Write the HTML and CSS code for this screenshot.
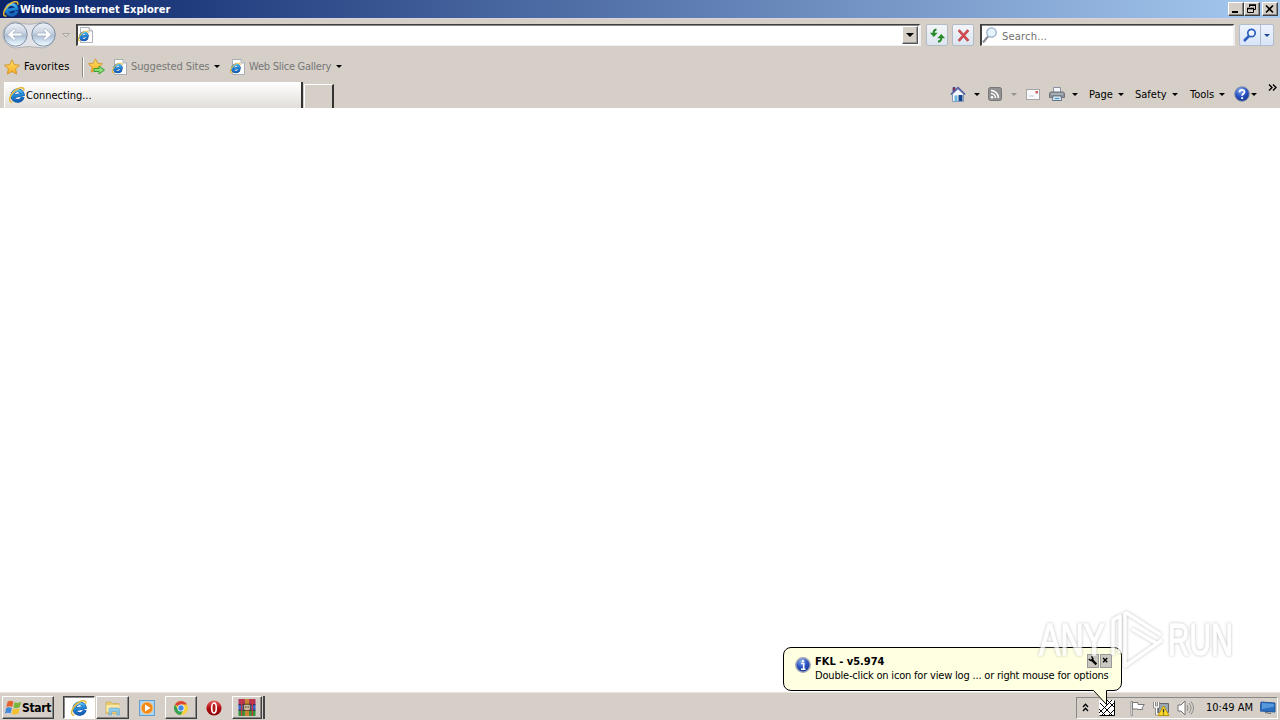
FILE: index.html
```
<!DOCTYPE html>
<html lang="en">
<head>
  <meta charset="UTF-8" />
  <title>Windows Internet Explorer</title>
  <meta name="viewport" content="width=device-width, initial-scale=1" />
  <link rel="stylesheet" href="styles.css">
</head>
<body>
<svg class="defs" width="0" height="0">
  <defs>
    <linearGradient id="blueE" x2="0" y2="1"><stop offset="0" stop-color="#5cc4f5"/><stop offset=".5" stop-color="#1f86d6"/><stop offset="1" stop-color="#1560b8"/></linearGradient>
    <radialGradient id="ball" cx=".4" cy=".25" r=".8"><stop offset="0" stop-color="#91b2f0"/><stop offset=".5" stop-color="#2b55c4"/><stop offset="1" stop-color="#14318c"/></radialGradient>
    <linearGradient id="nav" x2="0" y2="1"><stop offset="0" stop-color="#eef2f8"/><stop offset=".4" stop-color="#ccd6e4"/><stop offset=".55" stop-color="#aebfd4"/><stop offset=".8" stop-color="#d3e4f2"/><stop offset="1" stop-color="#f4fcff"/></linearGradient>
    <linearGradient id="gold" x2="0" y2="1"><stop offset="0" stop-color="#ffe66e"/><stop offset="1" stop-color="#f7a81c"/></linearGradient>
    <linearGradient id="red" x2="0" y2="1"><stop offset="0" stop-color="#e66"/><stop offset=".5" stop-color="#b30d12"/><stop offset="1" stop-color="#8c0006"/></linearGradient>
  </defs>
  <symbol id="ie" viewBox="0 0 16 16">
    <g transform="rotate(-12 8 8)">
      <path d="M13.300 11A5.300 5.300 0 1 1 13.800 8.700H5" fill="none" stroke="#134f9c" stroke-width="3.600"/>
      <path d="M13.300 11A5.300 5.300 0 1 1 13.800 8.700H5" fill="none" stroke="url(#blueE)" stroke-width="2.700"/>
    </g>
    <path d="M3.400 14.900C-.4 15.800.2 11.500 2.400 7.600 5.500 2.700 11.300-.3 14 1c1 .6.900 1.700.6 2.700" fill="none" stroke="#e6b93a" stroke-width="1.500"/>
  </symbol>
  <symbol id="iepage" viewBox="0 0 16 16">
    <path d="M2.500.500H11L14.500 4V15.500H2.500z" fill="#fdfdfd" stroke="#98a0a8" stroke-width=".8"/>
    <path d="M11 .5V4h3.500" fill="#ddd" stroke="#98a0a8" stroke-width=".7"/>
    <svg x="0" y="3.500" width="11" height="11" viewBox="0 0 16 16"><use href="#ie"/></svg>
  </symbol>
  <symbol id="star" viewBox="0 0 16 16">
    <path d="M8 .8l2.200 4.800 5.300.600-3.900 3.600 1.100 5.300L8 12.500l-4.700 2.600 1.100-5.300L.5 6.200l5.300-.600z" fill="url(#gold)" stroke="#d3922a" stroke-width=".9"/>
  </symbol>
</svg>

<header class="titlebar">
  <svg class="i16"><use href="#ie"/></svg>
  <span class="title">Windows Internet Explorer</span>
  <div class="winbtns">
    <button class="wb"><svg viewBox="0 0 13 10"><path d="M3 8h6" stroke="#000" stroke-width="2"/></svg></button>
    <button class="wb"><svg viewBox="0 0 13 10"><path d="M4.500 3V1.500h6v4H9M4 1.500h7M2.500 4.500h6v4h-6zM2 4.500h7" fill="none" stroke="#000"/><path d="M4 1h7M2 4.500h7" stroke="#000" stroke-width="1.600"/></svg></button>
    <button class="wb close"><svg viewBox="0 0 13 10"><path d="M3 1.500l7 7M10 1.500l-7 7" stroke="#000" stroke-width="1.600"/></svg></button>
  </div>
</header>

<div class="navbar">
  <svg class="backfwd" viewBox="0 0 58 30">
    <path d="M15 1.500Q29 7 43 1.500A13.300 13.300 0 0 1 43 28Q29 25 15 28A13.300 13.300 0 0 1 15 1.500z" fill="#e2e4e9" stroke="#b4b3b6"/>
    <g fill="url(#nav)" stroke="#8090a4"><circle cx="15.500" cy="14.500" r="11.700"/><circle cx="43.500" cy="14.500" r="11.700"/></g>
    <path d="M7.500 14.500l6.500-6 1.800 1.800L13 13.100h9v2.800h-9l2.800 2.800L14 20.500zM51.500 14.500L45 8.500l-1.800 1.800 2.800 2.800h-9v2.800h9l-2.800 2.800 1.800 1.800z" fill="#fff" stroke="#a3b2c5" stroke-width=".8"/>
  </svg>
  <svg class="histarrow" viewBox="0 0 8 5"><path d="M.5.500h7L4 4z" fill="#ddd9d4" stroke="#aaa69f"/></svg>
  <div class="address">
    <svg class="i16"><use href="#iepage"/></svg>
    <button class="drop"><i class="arr"></i></button>
  </div>
  <button class="tool refresh"><svg viewBox="0 0 16 16"><path d="M7 2.500C4 2.500 4.500 5 4.500 6" fill="none" stroke="#278b2c" stroke-width="2"/><path d="M.8 5.500h7.400L4.500 9.500zM7.800 10.500h7.400L11.500 6.500z" fill="#278b2c"/><path d="M11.500 10c0 2 0 3.500-3 3.800" fill="none" stroke="#278b2c" stroke-width="2"/></svg></button>
  <button class="tool stop"><svg viewBox="0 0 16 16"><path d="M3.500 3l9 10M12.500 3l-9 10" stroke="#b0525a" stroke-width="2.500"/><path d="M3.500 3l9 10M12.500 3l-9 10" stroke="#dc4850" stroke-width="1.500"/></svg></button>
  <div class="search">
    <svg class="i16" viewBox="0 0 16 16"><path d="M1 15.500L6 9.500" stroke="#8b8e98" stroke-width="2.200"/><circle cx="9.500" cy="5.500" r="4.700" fill="#e4f3fc" stroke="#9aafc9" stroke-width="1.300"/></svg>
    <span>Search...</span>
  </div>
  <div class="go">
    <svg viewBox="0 0 20 20"><path d="M4 16l5-5" stroke="#2b5fbd" stroke-width="2.500"/><circle cx="11.500" cy="8" r="3.700" fill="#eef5ff" stroke="#2b5fbd" stroke-width="1.700"/></svg>
    <span class="godrop"><i class="arr blue"></i></span>
  </div>
</div>

<div class="favbar">
  <svg class="i16"><use href="#star"/></svg>
  <span class="fav">Favorites</span>
  <i class="sep"></i>
  <svg class="addfav" viewBox="0 0 17 17"><use href="#star" width="15" height="15"/><path d="M6 10.500h5V8l5.500 4-5.500 4v-2.500H6z" fill="#8fdc78" stroke="#2f9a2c" stroke-width=".9"/></svg>
  <svg class="i16 p1"><use href="#iepage"/></svg>
  <span class="link sug">Suggested Sites</span><i class="arr"></i>
  <svg class="i16 p2"><use href="#iepage"/></svg>
  <span class="link web">Web Slice Gallery</span><i class="arr"></i>
</div>

<div class="tabrow">
  <div class="tab"><svg class="i16"><use href="#ie"/></svg><span class="conn">Connecting...</span></div>
  <div class="newtab"></div>
  <div class="cmdbar">
    <svg class="i16" viewBox="0 0 16 16"><path d="M3 1.500h2v4H3z" fill="#b02b38" stroke="#272b80" stroke-width=".7"/><path d="M2.500 8v7.500h11V8L8 3z" fill="#f5f8fc" stroke="#8996b4"/><path d="M.8 8.500L8 1.500l7.200 7" fill="none" stroke="#4c5ba6" stroke-width="1.400"/><path d="M4.500 9.500h3v6h-3z" fill="#6fb7dd"/><path d="M8.500 9h4v6h-4z" fill="#15428c"/></svg>
    <i class="arr a1"></i>
    <svg class="rss" viewBox="0 0 14 14"><rect x=".5" y=".5" width="13" height="13" rx="2" fill="#929292" stroke="#777"/><path d="M3 6.500a4.500 4.500 0 0 1 4.500 4.500M3 3.500a7.500 7.500 0 0 1 7.500 7.500" fill="none" stroke="#fff" stroke-width="1.500"/><circle cx="4" cy="10.200" r="1.300" fill="#fff"/></svg>
    <i class="arr gray a2"></i>
    <svg class="mail" viewBox="0 0 14 11"><rect x=".5" y=".5" width="13" height="10" fill="#f8f9fb" stroke="#a7a5a9"/><path d="M3 7h5" stroke="#c6c9d3"/><path d="M9.500 2h2.500v2.500H9.500z" fill="#cf6262"/></svg>
    <svg class="print" viewBox="0 0 16 16"><path d="M4.500 1.500h7v5h-7z" fill="#f2f5fa" stroke="#8991a0"/><path d="M1.500 6h13l1 1.500v4H.5v-4z" fill="#8a8e97" stroke="#6e737d"/><path d="M2 8h12" stroke="#c4c8ce"/><path d="M4 10h8l.5 4.500h-9z" fill="#eff7ff" stroke="#61728a"/><path d="M5.500 12.500h5" stroke="#4d99bd" stroke-width="1.500"/></svg>
    <i class="arr a3"></i>
    <span class="page">Page</span><i class="arr"></i>
    <span class="safety">Safety</span><i class="arr"></i>
    <span class="tools">Tools</span><i class="arr"></i>
    <svg class="help" viewBox="0 0 16 16"><circle cx="8" cy="8" r="7.300" fill="url(#ball)" stroke="#8790ac"/><path d="M5.600 6.200C5.600 3 10.600 3.200 10.500 6c0 1.800-2.400 1.800-2.400 3.800" fill="none" stroke="#fff" stroke-width="1.800"/><path d="M7.200 11.200h1.900V13H7.200z" fill="#fff"/></svg>
    <i class="arr"></i>
    <svg class="more" viewBox="0 0 9 7"><path d="M1 .5l3 3-3 3M5 .5l3 3-3 3" fill="none" stroke="#000" stroke-width="1.400"/></svg>
  </div>
</div>

<main class="content"></main>

<footer class="taskbar">
  <button class="task start">
    <svg viewBox="0 0 16 16"><path d="M2.500 2.500C4.500 1 6 1.500 8 2.500L6.800 7.500C5 6.500 3 6.400 1.200 7.700z" fill="#e6612d"/><path d="M9 3c2 1 4 1 6.300-.3L14 7.600c-2 1.300-4 1.300-6.100.3z" fill="#79b63e"/><path d="M1 8.700c2-1.300 3.700-1 5.500-.2L5.200 13.500C3.400 12.600 1.700 12.600 0 13.800z" fill="#3e8bdb"/><path d="M7.600 9c2 1 4 .9 6.200-.3l-1.300 5c-2.200 1.300-4.200 1.200-6.200.2z" fill="#f5c02f"/></svg>
    <span>Start</span>
  </button>
  <button class="task pressed"><svg class="i16"><use href="#ie"/></svg></button>
  <button class="task folder"><svg class="i16" viewBox="0 0 16 16"><path d="M1 2h5l1.500 1.500H14v10H1z" fill="#e9c970" stroke="#cba748" stroke-width=".6"/><path d="M1.500 5h13v7h-13z" fill="#fbe9a6"/><path d="M4 15V9.500Q4 8 5.500 8h7Q14.500 8 14.500 9.500V15h-2.500v-3.500H6.500V15z" fill="#8ecbec" stroke="#5ba3cb" stroke-width=".6"/></svg></button>
  <svg class="media" viewBox="0 0 16 16"><rect x=".5" y=".5" width="15" height="15" fill="#a8d5f5" stroke="#5f9fd1"/><circle cx="8" cy="8" r="6" fill="#f08a18" stroke="#fac680"/><path d="M6 4.500L11.500 8 6 11.500z" fill="#fff"/></svg>
  <button class="task chrome"><svg class="i16" viewBox="0 0 16 16"><circle cx="8" cy="8" r="7" fill="#f7d03b"/><path d="M8 8L1.900 4.500A7 7 0 0 1 14.100 4.500H8z" fill="#dc4638"/><path d="M8 8L5.200 9.500 1.900 4.500A7 7 0 0 0 7.500 15L11 9.600z" fill="#35a256"/><circle cx="8" cy="8" r="3.500" fill="#fff"/><circle cx="8" cy="8" r="2.700" fill="#4687e8"/></svg></button>
  <svg class="opera" viewBox="0 0 16 16"><circle cx="8" cy="8" r="7.600" fill="url(#red)"/><ellipse cx="8" cy="8" rx="2.300" ry="5" fill="#b51c1c" stroke="#fff" stroke-width="1.600"/></svg>
  <button class="task rar"><svg class="i18" viewBox="0 0 16 16"><path d="M0 0h16v5.300H0z" fill="#b3325a"/><path d="M0 5.300h16v5.300H0z" fill="#3a62c8"/><path d="M0 10.600h16V16H0z" fill="#2f9440"/><path d="M0 5.300h16M0 10.600h16" stroke="#252238" stroke-width=".8"/><path d="M6 0h4v16H6z" fill="#ca8432"/><path d="M5 5h6v5.500H5z" fill="#f7eecb" stroke="#4c3921"/><path d="M7 6v3M9 6v3" stroke="#4c3921"/><path d="M3 0v16M13 0v16" stroke="#d03837" stroke-width="1.200"/></svg></button>
  <i class="stack"></i>

  <div class="tray">
    <svg class="chev" viewBox="0 0 7 9"><path d="M1 4l2.500-2.700L6 4M1 8l2.500-2.700L6 8" fill="none" stroke="#000" stroke-width="1.300"/></svg>
    <svg class="keylog" viewBox="0 0 16 16"><path d="M0 0h16v16H0z" fill="#fff"/><path d="M0 13L13 0M2 16L16 2M9 16l7-7M1 3l12 12M0 9l6 6M8 0l7 7" stroke="#000"/><path d="M.5 15.500h15V.500" fill="none" stroke="#000"/></svg>
    <svg class="flag" viewBox="0 0 16 16"><path d="M2 1.500h1.500v14H2z" fill="#fff" stroke="#777" stroke-width=".7"/><path d="M3.500 2.500H9v2h6.300l-2 3 .2 2H8.500V9h-5z" fill="#fff" stroke="#777"/></svg>
    <svg class="net" viewBox="0 0 16 16"><path d="M5.500 3.500h10v9h-10z" fill="#98a7ae" stroke="#63666c"/><path d="M1.500 2v5h4V2M3.500 7v7H7" fill="none" stroke="#666" stroke-width="2.600"/><path d="M1.500 2v5h4V2M3.500 7v7H7" fill="none" stroke="#fff" stroke-width="1.300"/><path d="M10.500 6L16 15.500H5z" fill="#ffdc28" stroke="#ba940c"/><path d="M10.500 9v3.500M10.500 13.500v1" stroke="#333" stroke-width="1.300"/></svg>
    <svg class="vol" viewBox="0 0 17 16"><path d="M1 5h3l4-4v14l-4-4H1z" fill="#fff" stroke="#777"/><path d="M10 5q2 3 0 6M12 3q4 5 0 10M14 1.500q5 6.500 0 13" fill="none" stroke="#8c8c8c"/></svg>
    <span class="clock">10:49 AM</span>
    <svg class="desk" viewBox="0 0 16 13"><path d="M1 1l14 1v9L0 10z" fill="#2c6fc0" stroke="#24569b"/><path d="M2 2l12 1v2.500L2 8z" fill="#6aaae7" opacity=".7"/><path d="M5 11.500l6 1" stroke="#666"/></svg>
  </div>
</footer>

<div class="balloon">
  <svg class="info" viewBox="0 0 16 16"><circle cx="8" cy="8" r="7.200" fill="url(#ball)" stroke="#a3a8b8" stroke-width="1.500"/><path d="M6.200 6.500h2.500V12M6 12.200h4.500" fill="none" stroke="#fff" stroke-width="1.600"/><circle cx="8" cy="4" r="1.200" fill="#fff"/></svg>
  <div class="msg">
    <strong>FKL - v5.974</strong>
    <span>Double-click on icon for view log ... or right mouse for options</span>
  </div>
  <div class="bbtns">
    <svg viewBox="0 0 12 14"><path d="M4 5l6 6" stroke="#000" stroke-width="2.700"/><path d="M1 4.500Q4 8 6 4.500 5 2 4 1.500" fill="none" stroke="#000" stroke-width="1.800"/></svg>
    <svg viewBox="0 0 12 14"><path d="M2.500 3.500l5 5M7.500 3.500l-5 5" stroke="#000" stroke-width="1.700"/></svg>
  </div>
  <svg class="tail" viewBox="0 0 18 18"><path d="M1 0v2l14 14V0" fill="#ffffe1"/><path d="M0 1.500h1.500L14.500 15.500V1.500H17" fill="none" stroke="#000"/></svg>
</div>

<div class="watermark">
  <span class="any">ANY</span>
  <svg viewBox="0 0 62 66"><path d="M7 48V13L14 9V46M19 5L55 28M19 39V5M26 22l24 14M19 39v20L56 33" fill="none" stroke="#fff" stroke-width="3.500" stroke-linejoin="round"/></svg>
  <span class="run">RUN</span>
</div>
</body>
</html>
```
FILE: styles.css
```
:root{
  --face:#d5cfc7;
}
*{box-sizing:border-box;}
body{
  margin:0;width:1280px;height:720px;overflow:hidden;background:#fff;
  display:flex;flex-direction:column;position:relative;
  font:11px 'DejaVu Sans Condensed','Liberation Sans',sans-serif;color:#000;white-space:nowrap;
}
svg{display:block;flex:none;}
button{padding:0;border:0;font:inherit;background:var(--face);}
.defs{position:absolute;}
.i16{width:16px;height:16px;}
.i18{width:18px;height:17px;}
.arr{flex:none;width:0;height:0;border:3px solid transparent;border-top-color:#000;border-bottom:0;}
.arr.blue{border-top-color:#214b98;}
.arr.gray{border-top-color:#96928e;}

.titlebar{height:18px;flex:none;display:flex;align-items:center;padding:0 2px 0 3px;background:linear-gradient(90deg,#0a246a,#a6caf0);}
.title{margin-left:1px;color:#fff;font-weight:bold;letter-spacing:.03px;}
.winbtns{display:flex;margin-left:auto;}
.wb{width:16px;height:14px;border:1px solid;border-color:#fff #404040 #404040 #fff;box-shadow:inset -1px -1px #888;}
.wb svg{width:13px;height:10px;}
.wb.close{margin-left:2px;}

.navbar{height:34px;flex:none;display:flex;align-items:center;padding-bottom:1px;background:var(--face);border-top:1px solid #d6d3df;}
.backfwd{width:58px;height:30px;}
.histarrow{width:8px;height:5px;margin:1px 7px 0 4px;}
.address{width:845px;height:22px;margin-right:5px;margin-left:-1px;display:flex;align-items:center;justify-content:space-between;padding:0 1px 0 0;background:#fff;border:2px solid;border-color:#404040 #eee #eee #404040;border-top-width:1px;border-bottom-width:1px;box-shadow:inset 0 1px #888;}
.drop{width:16px;height:18px;display:grid;place-items:center;border:1px solid;border-color:#fff #555 #555 #fff;box-shadow:inset -1px -1px #999;}
.drop .arr{border-width:4px 4px 0;}
.tool{width:22px;height:22px;display:grid;place-items:center;background:linear-gradient(#f3f5f8,#dce5ef);border:1px solid #b3bcc6;border-radius:2px;}
.tool svg{width:17px;height:17px;}
.stop{margin-left:4px;}
.search{width:255px;height:22px;margin:0 4px 0 6px;display:flex;align-items:center;color:#707070;background:#fff;border:2px solid;border-color:#404040 #eee #eee #404040;border-top-width:1px;border-bottom-width:1px;box-shadow:inset 0 1px #888;}
.search span{margin-left:4px;letter-spacing:.2px;padding-top:2px;}
.go{width:35px;height:22px;display:flex;background:linear-gradient(#edf3fd,#d8e5f8);border:1px solid #b1bdcf;border-radius:2px;}
.go svg{width:20px;height:20px;}
.godrop{flex:1;display:grid;place-items:center;border-left:1px solid #b1bdcf;}

.favbar{height:29px;flex:none;display:flex;align-items:center;padding-left:4px;background:var(--face);}
.fav{width:47px;margin-left:4px;letter-spacing:.1px;}
.sep{width:2px;height:20px;margin-left:11px;background:#8e8a85;border-right:1px solid #fff;}
.addfav{width:17px;height:17px;margin-left:4px;}
.p1{margin-left:7px;}
.link{margin-left:3px;color:#777;letter-spacing:-.1px;}
.sug{width:79px;margin-right:4px;}
.p2{margin-left:10px;}
.web{width:82px;margin-right:5px;letter-spacing:-.25px;}

.tabrow{height:27px;flex:none;display:flex;align-items:flex-end;padding-left:4px;background:var(--face);}
.tab{width:299px;height:26px;display:flex;align-items:center;padding-left:4px;background:linear-gradient(#fff,#e1ded9);border-left:1px solid #fff;border-right:2px solid #333;}
.conn{margin:1px 0 0 1px;}
.newtab{width:30px;height:24px;margin-left:1px;border:1px solid #fff;border-right:2px solid #333;border-bottom:0;}
.cmdbar{align-self:flex-start;height:26px;display:flex;align-items:center;margin-left:616px;}
.a1{margin:0 8px;}
.rss{width:14px;height:14px;}
.a2{margin:0 9px 0 9px;}
.mail{width:14px;height:11px;}
.print{width:16px;height:16px;margin-left:9px;}
.a3{margin:0 11px 0 7px;}
.page{width:25px;margin-right:4px;}
.safety{width:33px;margin:0 4px 0 11px;}
.tools{width:26px;margin:0 3px 0 12px;}
.help{width:16px;height:16px;margin:0 1px 0 9px;}
.more{width:9px;height:7px;margin:-13px 0 0 11px;}

.content{flex:1;background:#fff;}

.taskbar{height:28px;flex:none;display:flex;align-items:center;padding:2px 2px 0 2px;background:var(--face);border-top:1px solid #e8e5df;}
.task{height:23px;display:flex;align-items:center;justify-content:center;border:1px solid;border-color:#fff #404040 #404040 #fff;box-shadow:inset -1px -1px #888;}
.start{width:52px;font-weight:bold;font-size:12px;letter-spacing:-.35px;}
.start svg{width:17px;height:17px;}
.pressed{width:32px;margin-left:9px;background:#fff;border-color:#404040 #fff #fff #404040;box-shadow:inset 1px 1px #888;}
.folder{width:33px;margin-left:1px;}
.media{width:16px;height:16px;margin:0 10px;}
.chrome{width:32px;}
.opera{width:16px;height:16px;margin:0 10px 0 9px;}
.rar{width:30px;}
.stack{width:3px;height:23px;border-right:2px solid #444;}
.tray{width:202px;height:22px;margin-left:auto;display:flex;align-items:center;border:1px solid;border-color:#888 #fff #fff #888;}
.chev{width:7px;height:9px;margin-left:5px;}
.keylog{width:16px;height:16px;margin-left:10px;}
.flag{width:16px;height:16px;margin-left:14px;}
.net{width:16px;height:16px;margin-left:8px;}
.vol{width:17px;height:16px;margin-left:8px;}
.clock{width:46px;margin-left:12px;}
.desk{width:16px;height:13px;margin-left:8px;}

.balloon{position:absolute;left:783px;top:647px;width:339px;height:44px;z-index:2;display:flex;background:#ffffe1;border:1px solid #000;border-radius:8px;}
.info{width:16px;height:16px;margin:9px 4px 0 11px;}
.msg{padding-top:7px;line-height:14px;}
.msg strong,.msg span{display:block;}
.msg span{letter-spacing:-.19px;}
.bbtns{position:absolute;right:9px;top:6px;display:flex;gap:1px;}
.bbtns svg{width:12px;height:14px;background:#cac7c0;border:1px solid #999;}
.tail{position:absolute;left:308px;top:41px;width:18px;height:18px;}

.watermark{position:absolute;left:1039px;top:607px;height:66px;z-index:3;display:flex;align-items:center;opacity:.75;font:44px 'Liberation Sans Narrow','Liberation Sans',sans-serif;color:#fff;-webkit-text-stroke:1.5px #fff;filter:drop-shadow(0 0 1.5px #aaa);}
.watermark span{display:block;width:67px;transform-origin:0 50%;transform:scaleX(.73);}
.watermark .run{transform:scaleX(.68);}
.watermark svg{width:62px;height:66px;}
```
